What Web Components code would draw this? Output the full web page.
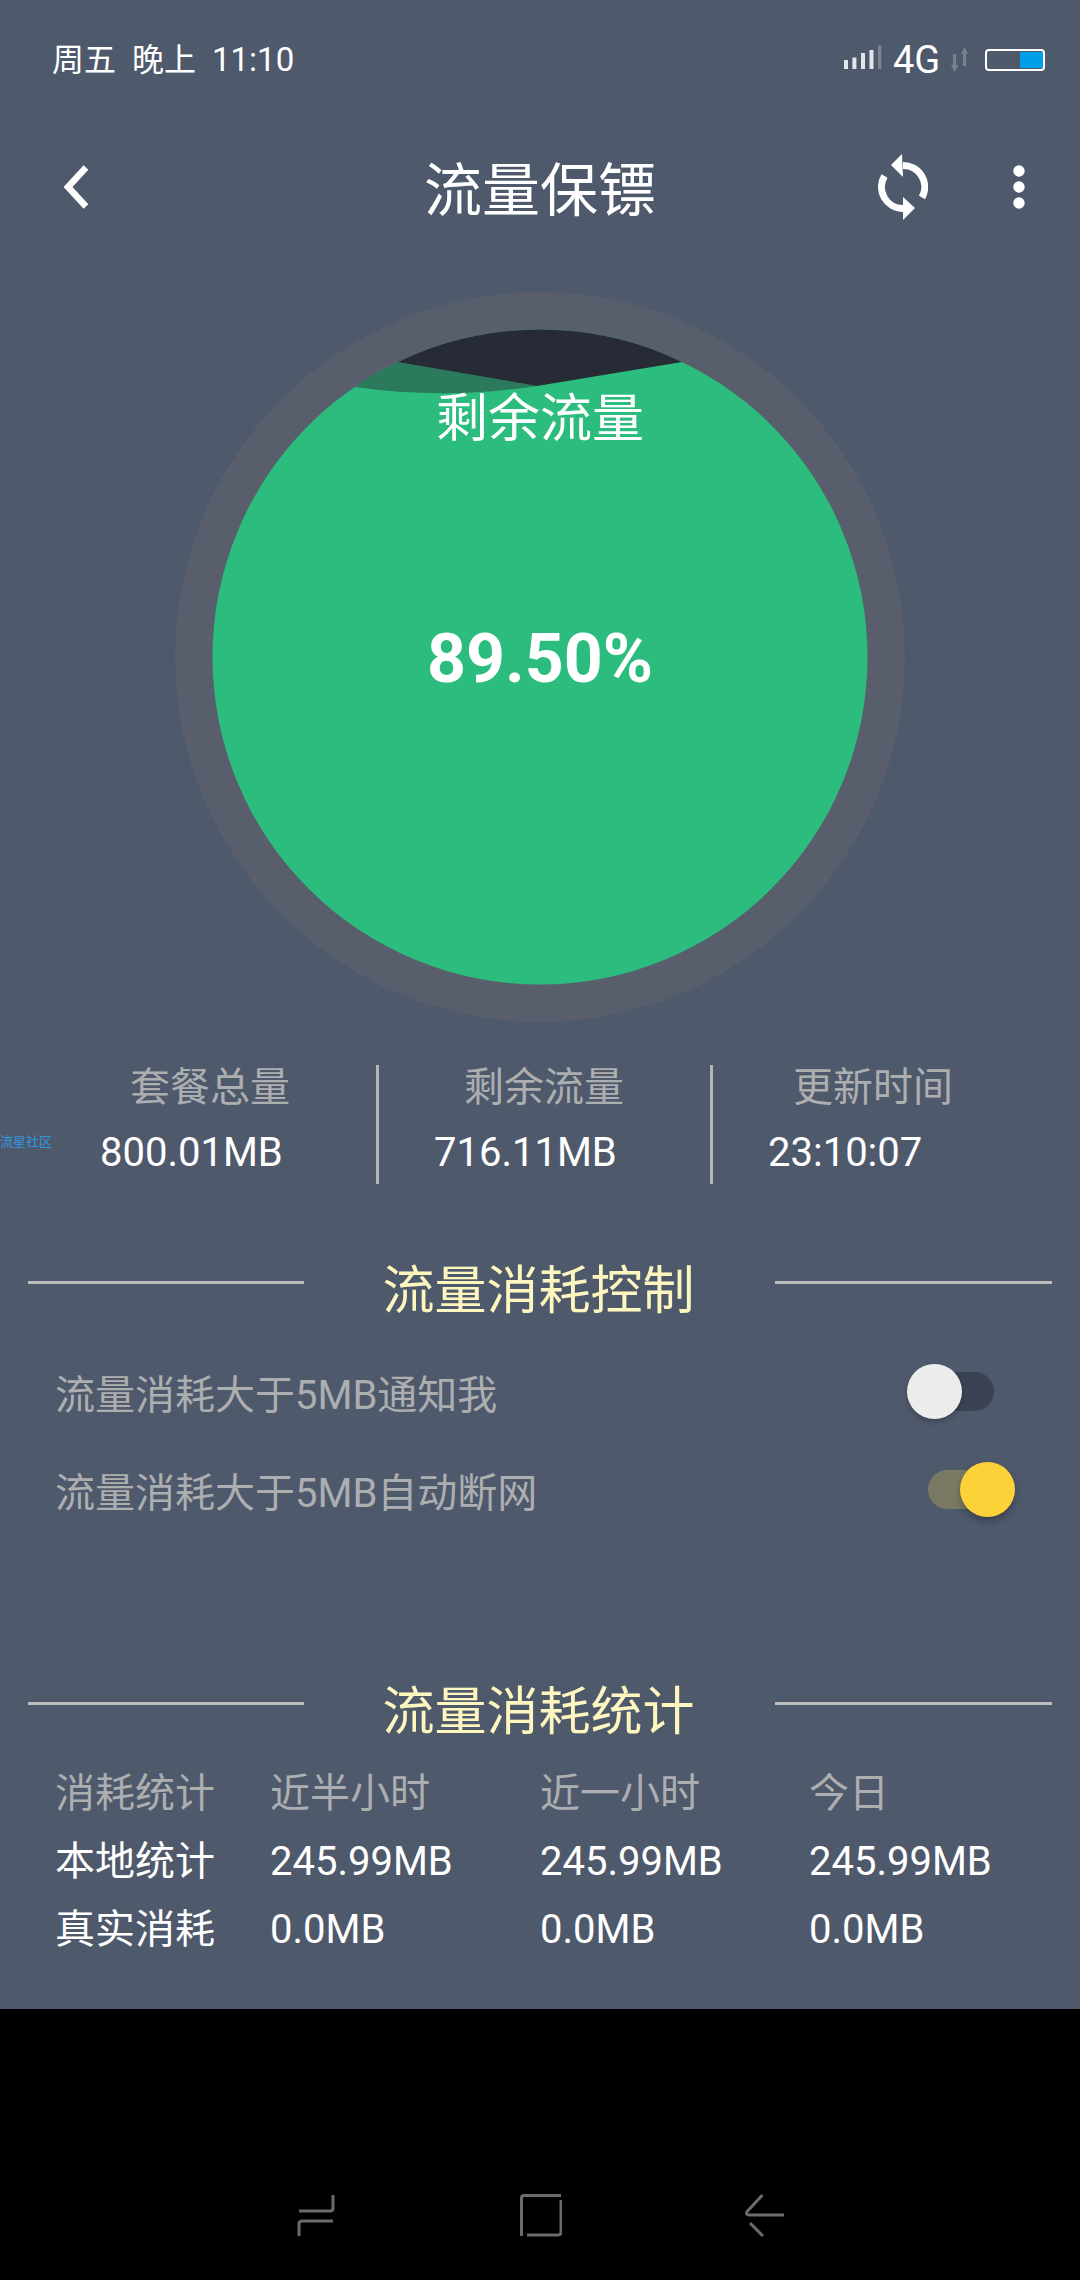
<!DOCTYPE html>
<html lang="zh">
<head>
<meta charset="utf-8">
<title>流量保镖</title>
<style>
  html, body { margin: 0; padding: 0; background: #000; }
  body { font-family: Roboto, "Noto Sans CJK SC", sans-serif; }
</style>
</head>
<body>
<app-screen>
  <status-bar></status-bar>
  <tool-bar>流量保镖</tool-bar>
  <flow-gauge label="剩余流量" percent="89.50%"></flow-gauge>
  <stat-row>
    <stat-cell style="--cell-w:337px;--label-x:88px;--value-x:58px"><span slot="label">套餐总量</span>800.01MB</stat-cell>
    <stat-cell style="--cell-w:334px;--label-x:85px;--value-x:55px"><span slot="label">剩余流量</span>716.11MB</stat-cell>
    <stat-cell last style="--cell-w:334px;--label-x:80px;--value-x:55px"><span slot="label">更新时间</span>23:10:07</stat-cell>
  </stat-row>
  <section-title style="margin-top:71px">流量消耗控制</section-title>
  <toggle-row style="margin-top:19px">流量消耗大于5MB通知我</toggle-row>
  <toggle-row checked>流量消耗大于5MB自动断网</toggle-row>
  <section-title style="margin-top:136px">流量消耗统计</section-title>
  <usage-table>
    <span class="dim">消耗统计</span><span class="dim">近半小时</span><span class="dim">近一小时</span><span class="dim">今日</span>
    <span>本地统计</span><span>245.99MB</span><span>245.99MB</span><span>245.99MB</span>
    <span>真实消耗</span><span>0.0MB</span><span>0.0MB</span><span>0.0MB</span>
  </usage-table>
</app-screen>
<nav-bar></nav-bar>

<script>
class AppScreen extends HTMLElement {
    constructor() {
        super();
        this.shadowDOM = this.attachShadow({mode: "open"});
    }
    connectedCallback() {
        this.shadowDOM.innerHTML = `
        <style>
          :host {
            display: flex;
            flex-direction: column;
            box-sizing: border-box;
            width: 1080px;
            height: 2009px;
            background: #4f596c;
            color: #fff;
            font-family: Roboto, "Noto Sans CJK SC", sans-serif;
            overflow: hidden;
          }
        </style>
        <slot></slot>`;
    }
}

class StatusBar extends HTMLElement {
    constructor() {
        super();
        this.shadowDOM = this.attachShadow({mode: "open"});
    }
    connectedCallback() {
        this.shadowDOM.innerHTML = `
        <style>
          :host {
            display: flex;
            align-items: center;
            justify-content: space-between;
            height: 120px;
            padding: 0 35px 0 52px;
            color: #fff;
            font-size: 32px;
            line-height: 44px;
          }
          .left { display: flex; gap: 16px; }
          .time { font-size: 33px; }
          .right { display: flex; align-items: center; }
          .net { font-size: 38px; margin: 0 10px; width: 48px; }
          svg { display: block; }
        </style>
        <div class="left"><span>周五</span><span>晚上</span><span class="time">11:10</span></div>
        <div class="right">
          <svg width="39" height="30" viewBox="0 0 39 30" fill="#e4e5e8">
            <rect x="0" y="15" width="4" height="9"/>
            <rect x="8.4" y="12.5" width="4" height="11.5"/>
            <rect x="17" y="8" width="4" height="16"/>
            <rect x="25.5" y="5" width="4" height="19"/>
            <rect x="34" y="0.5" width="3.4" height="23.5" fill="#7b8392"/>
          </svg>
          <span class="net">4G</span>
          <svg width="17" height="26" viewBox="0 0 17 26" fill="#79818f">
            <path d="M2 7h3v11h2.5L3.5 25 0 18h2z"/>
            <path d="M12 19h3V7h2L13.5 0 10 7h2z"/>
          </svg>
          <svg style="margin-left:17px" width="60" height="22" viewBox="0 0 60 22">
            <rect x="1" y="1" width="58" height="20" rx="3" fill="none" stroke="#fff" stroke-width="2"/>
            <rect x="35" y="3" width="23" height="16" fill="#00a0e9"/>
          </svg>
        </div>`;
    }
}

class ToolBar extends HTMLElement {
    constructor() {
        super();
        this.shadowDOM = this.attachShadow({mode: "open"});
    }
    connectedCallback() {
        this.shadowDOM.innerHTML = `
        <style>
          :host {
            display: grid;
            grid-template-columns: 1fr auto 1fr;
            align-items: center;
            height: 136px;
            font-size: 58px;
            line-height: 70px;
            color: #fff;
          }
          .back { margin: -2px 0 0 62px; display: block; }
          .title { margin-top: 6px; }
          .actions { display: flex; align-items: center; justify-content: flex-end; gap: 82px; padding-right: 52px; margin-top: -2px; }
          svg { display: block; }
        </style>
        <svg class="back" width="32" height="46" viewBox="0 0 32 46" fill="none" stroke="#fff" stroke-width="6.5">
          <path d="M24 3.5 6 23l18 19.500"/>
        </svg>
        <div class="title"><slot></slot></div>
        <div class="actions">
          <svg width="50" height="66" viewBox="0 0 50 66" fill="#fff">
            <path d="M25 11.500A21.500 21.500 0 0 1 44 43.500" fill="none" stroke="#fff" stroke-width="7"/>
            <path d="M6.500 22A21.500 21.500 0 0 0 25 54.500" fill="none" stroke="#fff" stroke-width="7"/>
            <path d="M13 11 24 0l1 23z"/>
            <path d="M37 54 25 43v23z"/>
          </svg>
          <svg width="18" height="46" viewBox="0 0 18 46" fill="#fff">
            <circle cx="9" cy="7" r="5.700"/>
            <circle cx="9" cy="23" r="5.700"/>
            <circle cx="9" cy="39" r="5.700"/>
          </svg>
        </div>`;
    }
}

class FlowGauge extends HTMLElement {
    constructor() {
        super();
        this.shadowDOM = this.attachShadow({mode: "open"});
    }
    connectedCallback() {
        this.shadowDOM.innerHTML = `
        <style>
          :host {
            display: block;
            position: relative;
            width: 730px;
            height: 730px;
            margin: 36px auto 0;
            color: #fff;
          }
          svg { display: block; }
          .label, .percent { position: absolute; left: 0; right: 0; text-align: center; }
          .label { top: 94px; font-size: 52px; line-height: 68px; }
          .percent { top: 317px; font-size: 68px; line-height: 100px; font-weight: 700; }
        </style>
        <svg width="730" height="730" viewBox="175 292 730 730">
          <defs><clipPath id="inner"><circle cx="540" cy="657" r="327.500"/></clipPath></defs>
          <circle cx="540" cy="657" r="365" fill="#585e6b"/>
          <g clip-path="url(#inner)">
            <rect x="175" y="292" width="730" height="730" fill="#2cbc7e"/>
            <path d="M355 387Q445 400 537 386L397 362 340 300V380z" fill="#2b7a5c"/>
            <path d="M397 362 537 386 682 362 720 300H380z" fill="#272b35"/>
          </g>
        </svg>
        <div class="label">${this.getAttribute("label")}</div>
        <div class="percent">${this.getAttribute("percent")}</div>`;
    }
}

class StatRow extends HTMLElement {
    constructor() {
        super();
        this.shadowDOM = this.attachShadow({mode: "open"});
    }
    connectedCallback() {
        this.shadowDOM.innerHTML = `
        <style>
          :host {
            display: flex;
            position: relative;
            height: 119px;
            margin-top: 43px;
            padding-left: 42px;
          }
          .mark {
            position: absolute;
            left: 0;
            top: 68px;
            font-size: 13px;
            line-height: 18px;
            color: #2f97e0;
          }
        </style>
        <span class="mark">流星社区</span>
        <slot></slot>`;
    }
}

class StatCell extends HTMLElement {
    constructor() {
        super();
        this.shadowDOM = this.attachShadow({mode: "open"});
    }
    connectedCallback() {
        this.shadowDOM.innerHTML = `
        <style>
          :host {
            display: block;
            box-sizing: border-box;
            width: var(--cell-w);
            border-right: 3px solid #b5b5b5;
            font-size: 40px;
            color: #fff;
          }
          :host([last]) { border-right: 0; }
          .label { padding: 3px 0 0 var(--label-x); height: 40px; line-height: 40px; color: #adaeb0; white-space: nowrap; }
          .value { padding-left: var(--value-x); margin-top: 25px; line-height: 40px; white-space: nowrap; }
        </style>
        <div class="label"><slot name="label"></slot></div>
        <div class="value"><slot></slot></div>`;
    }
}

class SectionTitle extends HTMLElement {
    constructor() {
        super();
        this.shadowDOM = this.attachShadow({mode: "open"});
    }
    connectedCallback() {
        this.shadowDOM.innerHTML = `
        <style>
          :host {
            display: flex;
            align-items: center;
            justify-content: space-between;
            height: 70px;
            padding: 0 28px;
            font-size: 52px;
            line-height: 60px;
            color: #fdf7bf;
          }
          i { display: block; width: 276px; height: 3px; background: #bdbdbd; margin-bottom: 16px; }
          i:last-child { width: 277px; }
          span { margin: 4px 0 0 -2px; }
        </style>
        <i></i><span><slot></slot></span><i></i>`;
    }
}

class ToggleRow extends HTMLElement {
    constructor() {
        super();
        this.shadowDOM = this.attachShadow({mode: "open"});
    }
    connectedCallback() {
        this.shadowDOM.innerHTML = `
        <style>
          :host {
            display: flex;
            align-items: center;
            justify-content: space-between;
            height: 98px;
            padding: 0 65px 0 55px;
            font-size: 40px;
            line-height: 50px;
            color: #adaeb0;
          }
          span { margin-top: 5px; }
          .switch { position: relative; width: 108px; height: 55px; margin-top: -3px; }
          .track { position: absolute; left: 21px; right: 21px; top: 8px; height: 39px; border-radius: 20px; background: #3b4254; }
          .thumb {
            position: absolute;
            left: 0;
            top: 0;
            width: 55px;
            height: 55px;
            border-radius: 50%;
            background: #ececec;
            box-shadow: 0 3px 5px rgba(0, 0, 0, 0.22);
          }
          :host([checked]) .track { background: #7a7a64; }
          :host([checked]) .thumb { left: auto; right: 0; background: #fdd138; box-shadow: 0 4px 7px rgba(0, 0, 0, 0.28); }
        </style>
        <span><slot></slot></span>
        <div class="switch"><div class="track"></div><div class="thumb"></div></div>`;
    }
}

class UsageTable extends HTMLElement {
    constructor() {
        super();
        this.shadowDOM = this.attachShadow({mode: "open"});
    }
    connectedCallback() {
        this.shadowDOM.innerHTML = `
        <style>
          :host {
            display: grid;
            grid-template-columns: 215px 270px 269px 1fr;
            grid-auto-rows: 68px;
            margin-top: 14px;
            padding-left: 55px;
            font-size: 40px;
            line-height: 68px;
            color: #fff;
          }
          ::slotted(.dim) { color: #adaeb0; }
        </style>
        <slot></slot>`;
    }
}

class NavBar extends HTMLElement {
    constructor() {
        super();
        this.shadowDOM = this.attachShadow({mode: "open"});
    }
    connectedCallback() {
        this.shadowDOM.innerHTML = `
        <style>
          :host {
            display: flex;
            justify-content: center;
            gap: 180px;
            box-sizing: border-box;
            width: 1080px;
            height: 271px;
            padding-top: 184px;
            background: #000;
          }
          svg { display: block; fill: none; stroke: #6b6b6b; stroke-width: 3; }
        </style>
        <svg width="44" height="44" viewBox="0 0 44 44">
          <path d="M39 2V15q0 3-3 3H5"/>
          <path d="M39 28H8q-3 0-3 3V43"/>
        </svg>
        <svg width="44" height="44" viewBox="0 0 44 44">
          <path d="M3.500 43V5q0-2.500 2.500-2.500H43"/>
          <path d="M43 7V39q0 3-3 3H9"/>
        </svg>
        <svg width="44" height="44" viewBox="0 0 44 44">
          <path d="M20.500 2 5 18.500q-1.500 3.500 2 3.500H42"/>
          <path d="M8 30 21 43"/>
        </svg>`;
    }
}

customElements.define("app-screen", AppScreen);
customElements.define("status-bar", StatusBar);
customElements.define("tool-bar", ToolBar);
customElements.define("flow-gauge", FlowGauge);
customElements.define("stat-row", StatRow);
customElements.define("stat-cell", StatCell);
customElements.define("section-title", SectionTitle);
customElements.define("toggle-row", ToggleRow);
customElements.define("usage-table", UsageTable);
customElements.define("nav-bar", NavBar);
</script>
</body>
</html>
